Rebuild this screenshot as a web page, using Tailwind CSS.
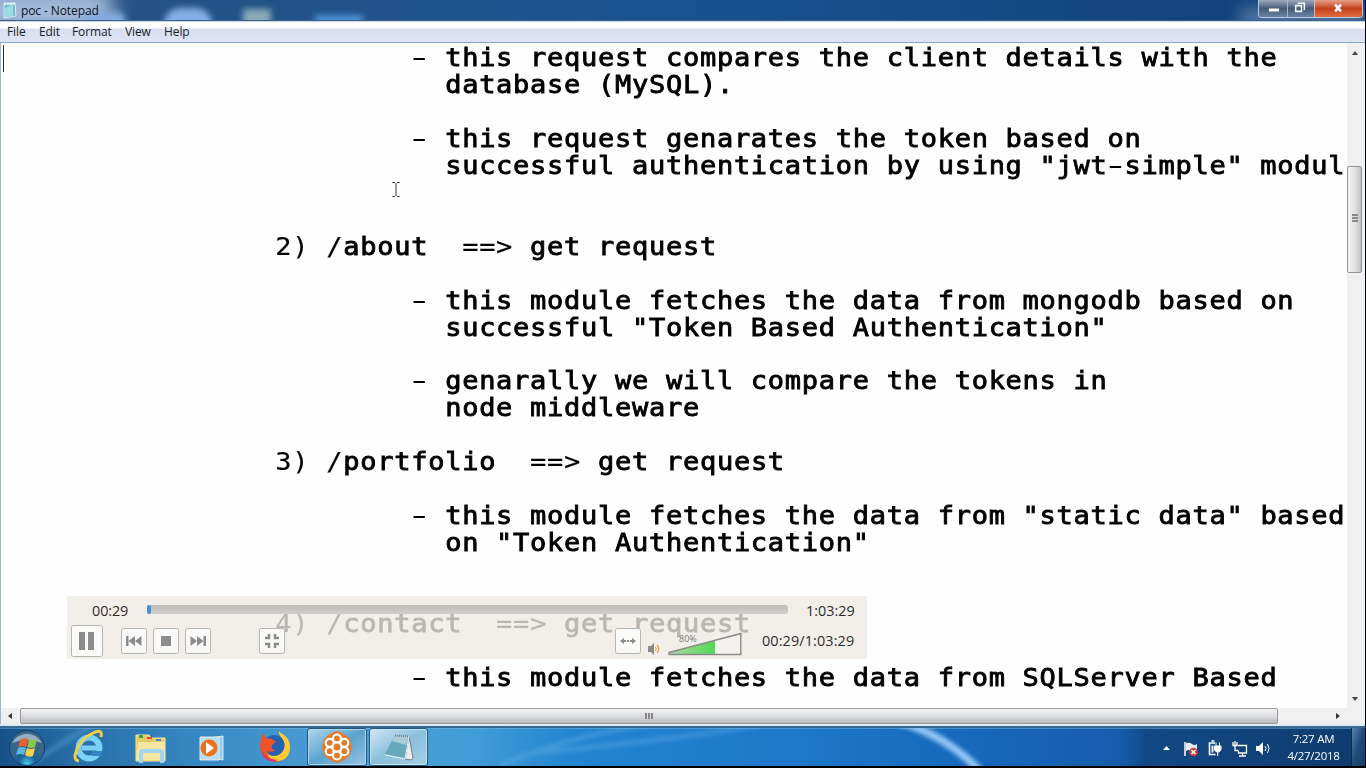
<!DOCTYPE html>
<html lang="en"><head><meta charset="utf-8"><title>poc - Notepad</title>
<script src="https://cdn.jsdelivr.net/npm/@tailwindcss/browser@4"></script></head>
<body class="bg-black">
<div class="relative w-[1366px] h-[768px] overflow-hidden flex flex-col bg-black font-['Open_Sans',sans-serif]">
<div class="w-[1365px] h-[766px] flex flex-col">
 <header class="relative h-[21px] shrink-0 flex justify-between overflow-hidden bg-linear-to-r from-[#285184] via-[#175390] to-[#123f78] border-b border-[#3d618b]">
  <div class="absolute -left-5 -top-3 w-[135px] h-11 rounded-full bg-[#a5bbda] blur-[10px]"></div>
  <div class="absolute left-[82px] top-[12px] w-11 h-5 rounded-full bg-[#84abdf] blur-[3px]"></div>
  <div class="absolute left-[164px] top-[8px] w-12 h-8 rounded-full bg-[#83aee5] blur-[3px]"></div>
  <div class="absolute left-[243px] top-[9px] w-7 h-5 bg-[#88abb6] blur-[3px]"></div>
  <div class="absolute left-[315px] top-[15px] w-12 h-3 bg-[#4b93d4] blur-[3px]"></div>
  <div class="absolute left-[1240px] top-2 w-[125px] h-5 bg-[#7e9dc1]/60 blur-[8px]"></div>
  <div class="relative flex pl-[2px]">
   <svg class="w-4 h-5" viewBox="0 0 16 20"><path d="M2 4l11-1 1 13-12 2z" fill="#71bdd0" stroke="#d7edf0"/><path d="M3 8l8-4v12l-8 1z" fill="#9bdbe4"/><path d="M2 4h11M3 2v3M6 2v3M9 2v3M12 2v3" stroke="#e9f4f3" stroke-width="1"/></svg>
   <span class="ml-[3px] text-[12px] leading-[21px] tracking-[-0.1px] text-[#0c1524]">poc - Notepad</span>
  </div>
  <div class="relative h-[18px] w-[105px] mr-[2px] flex rounded-b-[4px] border border-t-0 border-[#b9c8da] overflow-hidden">
   <svg class="w-[28px] h-[17px] bg-linear-to-b from-[#9daabd] via-[#465b79] to-[#6b84a5]" viewBox="0 0 28 17"><path d="M10 8.500h10v3H10z" fill="#fff"/></svg>
   <svg class="w-[27px] h-[17px] border-l border-[#a4b4c9] bg-linear-to-b from-[#9daabd] via-[#465b79] to-[#6b84a5]" viewBox="0 0 27 17"><path d="M8 5.500h6v6H8zM10 3h7v7" fill="none" stroke="#f4f5f7" stroke-width="1.600"/></svg>
   <svg class="w-[48px] h-[17px] border-l border-[#e3b9aa] bg-linear-to-b from-[#e59d87] via-[#c53f1b] to-[#e06c40]" viewBox="0 0 48 17"><path d="M20.500 4.500l6 7M26.500 4.500l-6 7" stroke="#fff" stroke-width="2.600"/></svg>
  </div>
 </header>
 <nav class="h-[22px] shrink-0 flex border-t border-b border-t-[#c7d4e4] border-b-[#8aa7c8] bg-linear-to-b from-white from-30% via-[#d7dff1] via-35% to-[#dfe4f4] pl-[7px] text-[12px] leading-[20px] tracking-[-0.1px] text-[#1c1d25]">
  <span class="w-8">File</span><span class="w-[33px]">Edit</span><span class="w-[53px]">Format</span><span class="w-[39px]">View</span><span>Help</span>
 </nav>
 <div class="h-[681px] shrink-0 flex bg-[#edf3fa] border-l border-[#9ab7d5]">
  <div class="flex flex-col w-[1361px]">
   <div class="flex h-[665px]">
    <main class="relative w-[1346px] h-[665px] overflow-hidden bg-[#fefefe]">
     <div class="absolute left-[2px] top-[2px] w-px h-[27px] bg-[#333]"></div>
     <pre class="origin-top-left scale-x-106 pt-px pl-[258.8px] font-['DejaVu_Sans_Mono',monospace] text-[25.5px] leading-[26.95px] tracking-[0.67px] text-black [-webkit-text-stroke:0.85px_black] [&_i]:not-italic [&_i]:[-webkit-text-stroke:0.2px_black] [&_b]:font-normal [&_b]:inline-block [&_b]:w-[16.02px] [&_b]:scale-x-165 [&_b]:[-webkit-text-stroke:0px]">        <b>-</b> this request compares the client details with the
          database (MySQL).

        <b>-</b> this request genarates the token based on
          successful authentication by using "jwt<b>-</b>simple" modul


<i>2) /</i>about  <i>==&gt;</i> get request

        <b>-</b> this module fetches the data from mongodb based on
          successful "Token Based Authentication"

        <b>-</b> genarally we will compare the tokens in
          node middleware

<i>3) /</i>portfolio  <i>==&gt;</i> get request

        <b>-</b> this module fetches the data from "static data" based
          on "Token Authentication"


<i>4) /</i>contact  <i>==&gt;</i> get request

        <b>-</b> this module fetches the data from SQLServer Based</pre>
     <svg class="absolute left-[390px] top-[138px] w-[10px] h-[18px]" viewBox="0 0 10 18"><path d="M1.500 1.500H4M6 1.500h2.500M5 2v13M1.500 15.500H4M6 15.500h2.500" stroke="#333" fill="none"/></svg>
    </main>
    <aside class="w-[15px] flex flex-col items-center bg-[#f0f0f0]">
     <svg class="w-[15px] h-[123px]" viewBox="0 0 15 123"><path d="M5 12l3-4 3 4z" fill="#444"/></svg>
     <div class="w-[15px] h-[107px] rounded-[2px] border border-[#929292] bg-linear-to-r from-[#f4f4f4] via-[#e4e4e6] to-[#bdbfc4] flex flex-col items-center justify-center gap-px pb-[3px]"><span class="w-[6px] h-[2px] bg-[#888]"></span><span class="w-[6px] h-[2px] bg-[#888]"></span><span class="w-[6px] h-[2px] bg-[#888]"></span></div>
     <svg class="w-[15px] h-[435px]" viewBox="0 0 15 435"><path d="M5 424l3 4 3-4z" fill="#444"/></svg>
    </aside>
   </div>
   <div class="h-4 flex bg-[#f0f0f0]">
    <svg class="w-[19px] h-4" viewBox="0 0 19 16"><path d="M11 5L7 8l4 3z" fill="#333"/></svg>
    <div class="w-[1258px] h-4 rounded-[2px] border border-[#999] bg-linear-to-b from-[#f3f3f3] via-[#dcdddf] to-[#b8babe] flex items-center justify-center gap-px"><span class="w-[2px] h-[6px] bg-[#888]"></span><span class="w-[2px] h-[6px] bg-[#888]"></span><span class="w-[2px] h-[6px] bg-[#888]"></span></div>
    <svg class="ml-[52px] w-4 h-4" viewBox="0 0 16 16"><path d="M6 5l4 3-4 3z" fill="#333"/></svg>
   </div>
  </div>
 </div>
 <div class="h-[4px] shrink-0 bg-[#dceaf7] border-b-2 border-[#396990]"></div>
 <footer class="relative h-[38px] flex grow justify-between overflow-hidden bg-linear-to-r from-[#1a5b95] via-[#2283cf] via-45% to-[#0d3563]">
  <svg class="absolute inset-0 w-[1365px] h-[38px]" viewBox="0 0 1365 38" preserveAspectRatio="none"><defs><linearGradient id="sky"><stop offset="0" stop-color="#165189"/><stop offset=".05" stop-color="#266da5"/><stop offset=".14" stop-color="#3587c2"/><stop offset=".25" stop-color="#4da0d6"/><stop offset=".35" stop-color="#409cd7"/><stop offset=".42" stop-color="#2384cf"/><stop offset=".58" stop-color="#1e78cb"/><stop offset=".69" stop-color="#176bbd"/><stop offset=".82" stop-color="#165cad"/><stop offset=".84" stop-color="#124985"/><stop offset="1" stop-color="#0e3a6d"/></linearGradient><filter id="soft"><feGaussianBlur stdDeviation="2"/></filter></defs><path d="M0 0h1365v38H0z" fill="url(#sky)"/><g filter="url(#soft)" fill="none"><path d="M20 44Q60 15 95-4M500 38Q560 10 650-4M530 25Q650 15 760-3" stroke="#70b8e8" stroke-width="5" opacity=".35"/><path d="M900-6Q947 8 981 44" stroke="#93c6f5" stroke-width="8"/></g><path d="M0 .5h1365" stroke="#7cbce2" opacity=".45"/></svg>
  <div class="relative flex h-[38px]">
   <svg class="w-[54px] h-[38px]" viewBox="0 0 54 38"><defs><radialGradient id="orb" cx=".5" cy=".95"><stop stop-color="#4bcaef"/><stop offset=".5" stop-color="#176298"/><stop offset="1" stop-color="#386789"/></radialGradient></defs><circle cx="27" cy="20" r="17.500" fill="url(#orb)" stroke="#123f68"/><path d="M12 15a16 14 0 0 1 30 0q-15-6-30 0" fill="#dcebf3" opacity=".55"/><path d="M20 12q4-3 8-1l-1.500 8q-4-2-8 0z" fill="#ec602b"/><path d="M29 11q4 2 8 0l-2 8q-4 2-7.500 0z" fill="#8cc64b"/><path d="M18 20q4-2 8 0l-2 7q-4-2-8 0z" fill="#58b6e7"/><path d="M27 20q4 2 8 0l-2 8q-4 2-8-1z" fill="#fad249"/></svg>
   <svg class="w-[68px] h-[38px]" viewBox="54 0 68 38"><circle cx="89" cy="20" r="10.500" fill="none" stroke="#7bd0f6" stroke-width="6"/><path d="M82 20h18" stroke="#7bd0f6" stroke-width="5"/><path d="M92 23h10v5H92z" fill="#3386c2"/><path d="M79 33q-6-1-3-9Q80 11 93 5q10-5 8 4" fill="none" stroke="#f2cf42" stroke-width="3"/></svg>
   <svg class="w-[58px] h-[38px]" viewBox="122 0 58 38"><path d="M136 7h13l2 3h14v23h-29z" fill="#e7c967" stroke="#f7e8a5"/><path d="M138 14h27v18h-29z" fill="#f7e7a2"/><path d="M139 7h4v3h-4z" fill="#32a852"/><path d="M147 9h5v2h-5z" fill="#d94d31"/><path d="M156 11h5v2h-5z" fill="#3993d0"/><path d="M141 35V25q0-2 3-2h15q3 0 3 2v10" fill="none" stroke="#a4d5ee" stroke-width="4"/></svg>
   <svg class="w-[60px] h-[38px]" viewBox="180 0 60 38"><path d="M211 10l12-2v24l-12-2z" fill="#9bcdec" stroke="#d7edf8"/><path d="M200 9h19v23h-19z" fill="#b9dcf1" stroke="#d9edf7"/><circle cx="209" cy="20" r="8.500" fill="#e9711e"/><path d="M206 14v12l8-6z" fill="#fff"/></svg>
   <svg class="w-[66px] h-[38px]" viewBox="240 0 66 38"><circle cx="274" cy="19" r="12" fill="#2861b0"/><path d="M266 10l-3-5q-2 3-2 7-2 5 0 11 4 11 15 11 11-1 13-10-5 5-12 5-8 0-10-6 5 2 9-1-6 0-4-5l4-3-4-3z" fill="#f05329"/><path d="M279 3q-1 3 3 7 4 6 2 11-3 7-10 7-5 0-7-3 3 9 12 8 11-2 11-14 0-8-6-12-4-2-5-4z" fill="#ffcb35"/><path d="M261 21q4 11 17 11-9 4-15-4z" fill="#e92b66"/></svg>
   <div class="w-[60px] h-[38px] ml-px rounded-[3px] border border-[#23577f] bg-linear-to-br from-[#b2d7ec] via-[#5ba2ce] to-[#94c5e2] flex items-center justify-center shadow-[inset_0_0_0_1px_#add8f0]"><svg class="w-[32px] h-[32px]" viewBox="0 0 32 32"><path d="M16 0l7 3 6 5 2 8-2 8-6 5-7 3-7-3-6-5-2-8 2-8 6-5z" fill="#e97922"/><g fill="#e07a28" stroke="#fff" stroke-width="2.200"><circle cx="16" cy="7.500" r="4"/><circle cx="23.300" cy="11.800" r="4"/><circle cx="23.300" cy="20.200" r="4"/><circle cx="16" cy="24.500" r="4"/><circle cx="8.700" cy="20.200" r="4"/><circle cx="8.700" cy="11.800" r="4"/></g><circle cx="16" cy="16" r="4.500" fill="#e07a28" stroke="#fff" stroke-width="2"/></svg></div>
   <div class="w-[59px] h-[38px] ml-[2px] rounded-[3px] border border-[#23577f] bg-linear-to-br from-[#d1e7f3] via-[#8abfdd] to-[#a6cfe6] flex items-center justify-center shadow-[inset_0_0_0_1px_#c6e4f3]"><svg class="w-8 h-8" viewBox="0 0 32 32"><path d="M26 5l4 22-2 2-6-1z" fill="#e9eced" stroke="#727c82"/><path d="M12 4l14 1-4 22-20-4z" fill="#65a8bc"/><path d="M12 4l14 1-3 9-14-4z" fill="#a9cdd5"/><path d="M2 24l20 4 4-23" fill="none" stroke="#e5f2f6"/><path d="M12 4.500l14 1" stroke="#6f8490" stroke-width="2" stroke-dasharray="1 1"/></svg></div>
  </div>
  <div class="relative flex h-[38px] items-center text-white">
   <svg class="w-[115px] h-[38px]" viewBox="1159 0 115 38"><path d="M1164 22l3.500-4 3.500 4z" fill="#fff"/><path d="M1186 14v14" stroke="#fff" stroke-width="1.500"/><path d="M1187 15q4-1 6 1t5 0v8q-4 1-6-1t-5 0z" fill="#e9edf1"/><circle cx="1194.500" cy="24" r="4.300" fill="#da3934"/><path d="M1192.500 22l4 4m0-4l-4 4" stroke="#fff" stroke-width="1.500"/><path d="M1216 15h-5.500v11.500h6M1212.500 13h3" stroke="#fff" stroke-width="1.600" fill="none"/><path d="M1212.500 17.500h2v7h-2z" fill="#e9edf1"/><path d="M1215.500 18h6.500v4l-2 2h-2.500l-2-2zM1217 14.500v4m3.500-4v4M1218.700 24v4" fill="#fff" stroke="#fff"/><path d="M1239 17.500h8.500v7.500h-8v-2M1240 28h7M1243.500 25v3M1234 14v3.500h4V14M1236 13v9.500h3.500" fill="none" stroke="#fff" stroke-width="1.300"/><path d="M1257 18h3l4-4v13l-4-4h-3z" fill="#fff"/><path d="M1266 18q2 2.500 0 5M1268.500 16q3 4.500 0 9" fill="none" stroke="#fff"/></svg>
   <div class="w-[78px] pl-[3px] text-center text-[11.5px] leading-[17px] tracking-[-0.25px]"><div>7:27 AM</div><div>4/27/2018</div></div>
   <div class="w-[14px] h-[38px] border-l border-[#0c2748] bg-linear-to-br from-[#5784ad] via-[#204a78] to-[#15406e]"></div>
  </div>
 </footer>
</div>
<section class="absolute left-[67px] top-[596px] w-[800px] h-[63px] bg-[#eeeae6]/78 text-[#2f2e2c]">
 <div class="flex h-[27px] pt-[9px]">
  <span class="w-[80px] pl-[25px] leading-[12px] text-[14.4px] tracking-[-0.1px]">00:29</span>
  <div class="w-[641px] h-[9px] rounded-[3px] bg-linear-to-b from-[#bebdb9] to-[#d1cfcb]"><div class="h-[9px] w-[4px] rounded-[2px] bg-[#4a90d9]"></div></div>
  <span class="ml-[18px] leading-[12px] text-[14.4px] tracking-[0px]">1:03:29</span>
 </div>
 <div class="flex h-9 items-center [&_svg]:shrink-0">
  <svg class="ml-1 w-8 h-9" viewBox="0 0 32 36"><rect x=".5" y="2.500" width="31" height="31" rx="2" fill="#fafaf9" stroke="#b7b5b2"/><path d="M8 9h6v18H8zm9 0h6v18h-6z" fill="#8c8c8c"/></svg>
  <svg class="ml-[18px] w-[90px] h-9" viewBox="0 0 90 36"><g fill="#f9f9f8" stroke="#b7b5b2"><rect x=".5" y="5.500" width="25" height="25" rx="2"/><rect x="32.500" y="5.500" width="25" height="25" rx="2"/><rect x="64.500" y="5.500" width="25" height="25" rx="2"/></g><path d="M5 13h2.500v10H5zM14 13v10l-6.500-5zM20.500 13v10L14 18zM40 13h10v10H40zM69.500 13v10l6.500-5zM76 13v10l6.500-5zM82.500 13H85v10h-2.500z" fill="#8c8c8c"/></svg>
  <svg class="ml-12 w-[26px] h-9" viewBox="0 0 26 36"><rect x=".5" y="5.500" width="25" height="25" rx="2" fill="#f9f9f8" stroke="#b7b5b2"/><path d="M6 15h4v-4M20 15h-4v-4M6 21h4v4M20 21h-4v4" fill="none" stroke="#8c8c8c" stroke-width="2.500"/></svg>
  <svg class="ml-[330px] w-[26px] h-9" viewBox="0 0 26 36"><rect x=".5" y="5.500" width="25" height="25" rx="2" fill="#f9f9f8" stroke="#b7b5b2"/><path d="M5 18l4-3v6zM21 18l-4-3v6z" fill="#8c8c8c"/><path d="M9 18h8" stroke="#8c8c8c" stroke-width="2" stroke-dasharray="2 1"/></svg>
  <svg class="ml-[7px] w-[14px] h-9" viewBox="0 0 14 36"><path d="M0 23h3l3-3v12l-3-3H0z" fill="#888"/><path d="M7.500 24q1.500 2 0 4M9 22q3.500 4 0 8" fill="none" stroke="#f0a33b" stroke-width="1.200"/></svg>
  <svg class="ml-[5px] w-[76px] h-9" viewBox="0 0 76 36"><defs><linearGradient id="vol"><stop stop-color="#afd8a9"/><stop offset="1" stop-color="#50db50"/></linearGradient></defs><path d="M2 29.500L74 10.500v21H2z" fill="#f4f2f0"/><path d="M2 29.500l46-12.100V31H2z" fill="url(#vol)"/><path d="M2 29.500L73.800 10.500V31.500H2z" fill="none" stroke="#8c8a87" stroke-width="1.400"/><text x="12" y="19" font-family="Open Sans" font-size="9" fill="#777">80%</text></svg>
  <span class="ml-[19px] text-[14.4px] tracking-[0.12px] whitespace-nowrap">00:29/1:03:29</span>
 </div>
</section>
</div></body></html>
